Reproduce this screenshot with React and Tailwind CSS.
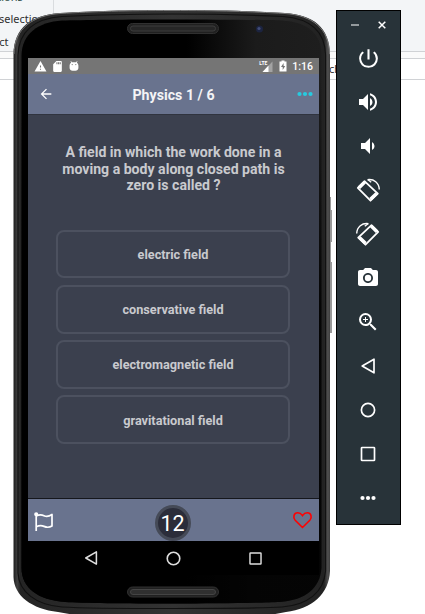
import React from "react";
import { MdPowerSettingsNew, MdVolumeUp, MdVolumeDown, MdCameraAlt, MdZoomIn, MdArrowBack, MdWarning, MdSdCard } from "react-icons/md";

const answers = ["electric field", "conservative field", "electromagnetic field", "gravitational field"];

function Casing() {
  return (
    <svg className="absolute inset-0" width="425" height="614" viewBox="0 0 425 614" fill="none">
      <defs>
        <linearGradient id="rim" x1="14" x2="331" y1="0" y2="0" gradientUnits="userSpaceOnUse">
          <stop offset="0" stopColor="#222" />
          <stop offset="0.01" stopColor="#414141" />
          <stop offset="0.02" stopColor="#242424" />
          <stop offset="0.5" stopColor="#333" />
          <stop offset="0.978" stopColor="#222" />
          <stop offset="0.99" stopColor="#505050" />
          <stop offset="1" stopColor="#353535" />
        </linearGradient>
        <linearGradient id="glass" x1="22" x2="322" y1="0" y2="0" gradientUnits="userSpaceOnUse">
          <stop offset="0.55" stopColor="#000" />
          <stop offset="0.78" stopColor="#1b1b1b" />
          <stop offset="1" stopColor="#1e1e1e" />
        </linearGradient>
        <linearGradient id="shade" x1="0" x2="0" y1="20" y2="600" gradientUnits="userSpaceOnUse">
          <stop offset="0.1" stopColor="#000" stopOpacity="0" />
          <stop offset="0.5" stopColor="#000" stopOpacity="0.85" />
        </linearGradient>
      </defs>
      <path d="M330 197h1v13h1v32h-1v20h1v71h-2z" fill="#999" />
      <path d="M13.500 55C13.500 27 32 15 60 13C95 11 125 10 172 10C219 10 250 11 285 13C313 15 330 27 330 55V571C329 594 312 609 286 612L270 615H75L58 612C32 609 14 596 13.500 577Z" fill="url(#rim)" />
      <path d="M14 54C14.500 28 33 15.500 60 13.500C95 11.500 125 10.500 172 10.500C219 10.500 250 11.500 285 13.500C312 15.500 329 28 329.500 54" stroke="#777" strokeWidth="1" />
      <path d="M18 55C19 30 36 18.500 62 16.500C100 14.500 125 14 172 14C219 14 250 15 283 16.500C309 18.500 325 30 325.500 55V571C324 592 308 605 282 607C250 609 95 609 62 607C36 605 19 592 18 573Z" stroke="#111" strokeWidth="1.200" />
      <path d="M21.500 55C22 34 38 22 62 20.500C100 19 245 19 282 20.500C308 22 321.500 34 321.500 55V568C320 588 306 600 280 602C245 604 98 604 65 602C38 600 21.500 588 21.500 568Z" fill="url(#glass)" />
      <path d="M21.500 55C22 34 38 22 62 20.500C100 19 245 19 282 20.500C308 22 321.500 34 321.500 55V568C320 588 306 600 280 602C245 604 98 604 65 602C38 600 21.500 588 21.500 568Z" fill="url(#shade)" />
      <rect x="127.500" y="23.500" width="91" height="10" rx="5" fill="#202020" stroke="#303030" />
      <rect x="130.500" y="26" width="85" height="5" rx="2.500" fill="#262626" stroke="#3c3c3c" />
      <rect x="127.500" y="587" width="91" height="10" rx="5" fill="#202020" stroke="#303030" />
      <rect x="130.500" y="589.500" width="85" height="5" rx="2.500" fill="#303030" stroke="#444" />
      <circle cx="259.500" cy="29" r="3.500" fill="#1c2440" />
      <circle cx="259" cy="28.500" r="1.600" fill="#414c79" />
    </svg>
  );
}

function NavIcon({ kind, color = "#fff", size = 20 }) {
  return (
    <svg width={size} height={size} viewBox="0 0 20 20" fill="none" stroke={color} strokeWidth="1.700" strokeLinejoin="round">
      {kind === "back" && <path d="M4.200 10L16 3.200V16.800Z" />}
      {kind === "home" && <circle cx="10" cy="10" r="6.600" />}
      {kind === "recent" && <rect x="3.500" y="3.500" width="13" height="13" rx="0.600" />}
    </svg>
  );
}

function RotateIcon({ flip }) {
  return (
    <svg width="24" height="24" viewBox="0 0 24 24" className={flip ? "-scale-x-100" : ""} fill="none" stroke="#fff">
      <path d="M8.500 3.200L21.800 15.600L14.500 22.700L1.800 9.800Z" strokeWidth="1.800" strokeLinejoin="round" />
      <path d="M3 9.700L8.800 4.100M14.500 21.300L20.600 15.400" strokeWidth="3.400" />
      <path d="M11.500 1.700C18 .700 23 5 23.300 11.500" strokeWidth="1.400" />
      <path d="M12 1.700L15.200 4.300" strokeWidth="1.300" />
    </svg>
  );
}

function Dots({ color }) {
  return (
    <svg width="16" height="6" viewBox="0 0 16 6" fill={color}>
      <circle cx="2.500" cy="3" r="2.100" />
      <circle cx="8" cy="3" r="2.100" />
      <circle cx="13.500" cy="3" r="2.100" />
    </svg>
  );
}

function StatusBar() {
  return (
    <div className="flex h-4 shrink-0 items-center bg-[#757575] pl-1.5 pr-[6px] text-white">
      <MdWarning size={13} />
      <MdSdCard size={13} className="ml-[4px]" />
      <svg className="ml-[5px]" width="10" height="10" viewBox="0 0 10 10" fill="#fff">
        <path d="M.600 4.500C.600 2.800 1.800 2 2.300 1.700L1.400.500L2 .200L3.200 1.300H6.800L8 .200L8.600.500L7.700 1.700C8.200 2 9.400 2.800 9.400 4.500V7C9.400 8.500 8 9.700 6.500 9.700H3.500C2 9.700 .600 8.500 .600 7Z" />
        <circle cx="3.200" cy="3.600" r=".6" fill="#757575" />
        <circle cx="6.800" cy="3.600" r=".6" fill="#757575" />
      </svg>
      <div className="relative ml-auto h-3 w-[13px]">
        <svg className="absolute inset-0" width="13" height="12" viewBox="0 0 13 12">
          <path d="M12.500 1.500V12H2.500Z" fill="#a3a3a3" />
          <path d="M8.500 5.500V12H2.500Z" fill="#fff" />
        </svg>
        <span className="absolute top-0 -left-px text-[5px] leading-[6px] font-bold">LTE</span>
      </div>
      <svg className="ml-[6px]" width="8" height="12" viewBox="0 0 8 12">
        <path d="M2.500.500H5.500V1.500H7.500V11.500H.500V1.500H2.500Z" fill="#fff" />
        <path d="M4.600 3L2 7H3.700V10L6.200 6H4.600Z" fill="#757575" />
      </svg>
      <span className="ml-[5px] pt-px text-[10.500px] leading-4 font-medium">1:16</span>
    </div>
  );
}

function Screen() {
  return (
    <main className="absolute left-[28px] top-[58px] flex h-[517px] w-[291px] flex-col bg-black font-[Roboto,sans-serif]">
      <StatusBar />
      <header className="relative flex h-[40px] shrink-0 items-center justify-between bg-[#69738e] px-[10px] pr-[6px] text-white">
        <MdArrowBack size={16} />
        <h1 className="absolute inset-x-0 top-[11px] text-center text-[14.200px] leading-5 font-bold text-[#f4f4f6]">Physics 1 / 6</h1>
        <Dots color="#26cbe0" />
      </header>
      <section className="flex h-[384px] shrink-0 flex-col border-t border-[#30343f] bg-[#3b404e] pl-[28px] pr-[29px] text-center font-bold text-[#c9cace]">
        <h2 className="-ml-4 -mr-[17px] mt-[29px] h-[50px] text-[14.100px] leading-[16.500px]">
          A field in which the work done in a<br />moving a body along closed path is<br />zero is called ?
        </h2>
        <div className="mt-[35.500px] flex flex-col gap-[6.500px]">
          {answers.map((a) => (
            <button key={a} className="h-[48.800px] rounded-[8px] border-2 border-[#4c515f] pt-px text-[12.700px]">{a}</button>
          ))}
        </div>
      </section>
      <footer className="flex h-[43px] shrink-0 items-center justify-between border-t border-[#15171c] bg-[#69738e] px-[6px]">
        <svg className="mt-[3px]" width="20" height="20" viewBox="0 0 20 20" fill="none" stroke="#fff" strokeWidth="1.700">
          <path d="M2.200 1.500V19" />
          <path d="M2.200 4C5 2.500 8 2.700 10 3.700S15 4.500 18 2.500V14C15 15.800 12.500 15.500 10 14.400S5 13.500 2.200 14.800" strokeLinejoin="round" />
          <circle cx="2.200" cy="2.200" r="1.200" fill="#fff" />
        </svg>
        <div className="mr-px mt-[6px] flex size-[36px] items-center justify-center rounded-full border-[3px] border-[#454a57] bg-[#2b2d3a] pt-[2px] text-[21.500px] leading-none text-white">12</div>
        <svg width="21" height="20" viewBox="0 0 21 20" fill="none" stroke="#ff0000" strokeWidth="1.600">
          <path d="M10.500 17.500L3.200 10.300C.600 7.500 1.800 2.800 5.700 2.800C8 2.800 9.400 4 10.500 5.600C11.600 4 13 2.800 15.300 2.800C19.200 2.800 20.400 7.500 17.800 10.300Z" />
        </svg>
      </footer>
      <nav className="flex h-[34px] shrink-0 items-center justify-between pl-[54px] pr-[55px]">
        <NavIcon kind="back" color="#dedede" size={18} />
        <NavIcon kind="home" color="#dedede" size={19} />
        <NavIcon kind="recent" color="#dedede" size={17} />
      </nav>
    </main>
  );
}

const tools = [
  <MdPowerSettingsNew size={25} />,
  <MdVolumeUp size={24} />,
  <MdVolumeDown size={24} />,
  <RotateIcon />,
  <RotateIcon flip />,
  <MdCameraAlt size={24} />,
  <MdZoomIn size={24} />,
  <NavIcon kind="back" />,
  <NavIcon kind="home" />,
  <NavIcon kind="recent" />,
  <Dots color="#fff" />,
];

function Toolbar() {
  return (
    <aside className="absolute left-[336px] top-[10px] flex h-[515px] w-[65px] flex-col border border-black bg-[#283339] text-white">
      <div className="flex h-[25px] items-center justify-between pl-[14px] pr-[14px] pt-[3px]">
        <span className="h-[2px] w-2 bg-[#949a9d]" />
        <svg width="8" height="8" viewBox="0 0 8 8" stroke="#fff" strokeWidth="1.500"><path d="M.700.700L7.300 7.300M7.300.700L.700 7.300" /></svg>
      </div>
      {tools.map((tool, i) => (
        <div key={i} className="flex h-11 w-[62px] shrink-0 items-center justify-center">{tool}</div>
      ))}
    </aside>
  );
}

function Desktop() {
  return (
    <div className="flex h-full flex-col font-['Noto_Sans',sans-serif] text-[11px] text-[#303030]">
      <div className="relative h-[52px] shrink-0 border-b border-[#d0d2d5] bg-[#f3f5f7]">
        <div className="absolute left-[53px] h-[14px] w-px bg-[#d9dcdf]" />
        <span className="absolute -left-[9px] -top-[11px] leading-4 text-[#304f48]">ations</span>
        <span className="absolute -left-px top-[11px] leading-4">selection</span>
        <span className="absolute -left-[7px] top-[34px] leading-4">ect</span>
      </div>
      <div className="h-[6px] shrink-0 bg-[#fafafa]" />
      <div className="h-[22px] shrink-0 border-y border-[#d0d2d5] pl-[329px] leading-[20px]">ch</div>
    </div>
  );
}

export default function App() {
  return (
    <div className="relative h-[614px] w-[425px] overflow-hidden bg-white">
      <Desktop />
      <Casing />
      <Screen />
      <Toolbar />
    </div>
  );
}
